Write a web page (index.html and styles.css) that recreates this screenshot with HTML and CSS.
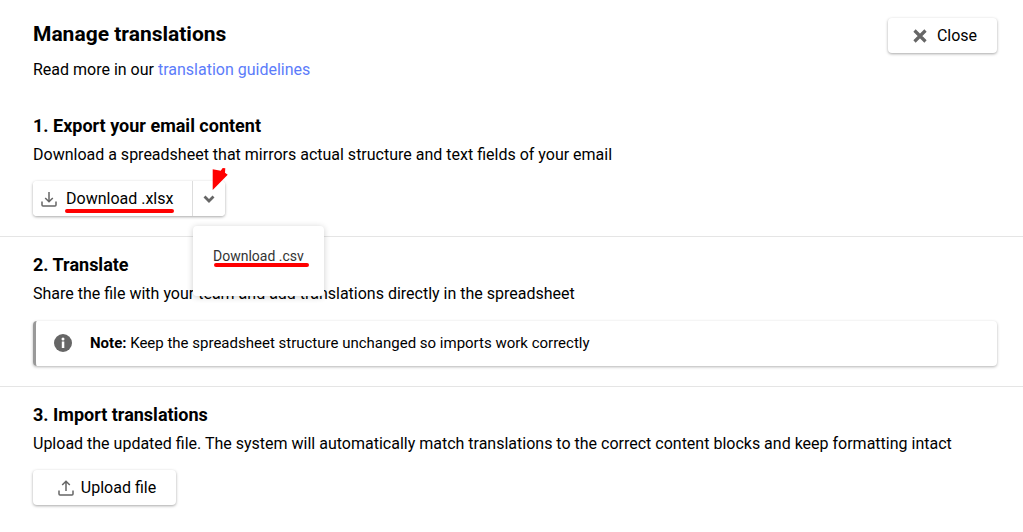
FILE: index.html
```html
<!DOCTYPE html>
<html lang="en">
<head>
    <meta charset="UTF-8">
    <title>Manage translations</title>
    <link rel="stylesheet" href="styles.css">
</head>
<body>
    <section class="section section-top">
        <div class="header">
            <div>
                <h1>Manage translations</h1>
                <p>Read more in our <a href="#">translation guidelines</a></p>
            </div>
            <button class="btn btn-close">
                <svg class="icon" viewBox="0 0 14 14"><path d="M1.500 1.500l11 11M12.500 1.500l-11 11" stroke="#666" stroke-width="3.200" fill="none"/></svg>
                Close
            </button>
        </div>
        <h2>1. Export your email content</h2>
        <p>Download a spreadsheet that mirrors actual structure and text fields of your email</p>
        <div class="split-wrap">
            <div class="split">
                <button class="split-main">
                    <svg class="icon" viewBox="0 0 18 18"><path d="M9 2v9.500M5.200 8l3.800 3.800L12.800 8M2 11.500V15a1 1 0 0 0 1 1h12a1 1 0 0 0 1-1v-3.500" stroke="#666" stroke-width="1.500" fill="none"/></svg>
                    <span class="marked">Download .xlsx</span>
                </button>
                <button class="split-toggle">
                    <svg class="chevron" viewBox="0 0 12 8"><path d="M1.500 1.500L6 6l4.500-4.500" stroke="#666" stroke-width="2.800" fill="none"/></svg>
                </button>
            </div>
            <svg class="arrow" viewBox="0 0 16 24"><path d="M.7 2.300l8 1.400L10.700 1l2.600.3-.3 4.400 2.700 2L.7 23z" fill="#f00"/></svg>
            <div class="menu">
                <span class="marked marked-small">Download .csv</span>
            </div>
        </div>
    </section>
    <section class="section section-translate">
        <h2>2. Translate</h2>
        <p>Share the file with your team and add translations directly in the spreadsheet</p>
        <div class="note">
            <svg class="note-icon" viewBox="0 0 18 18"><circle cx="9" cy="9" r="9" fill="#666"/><rect x="7.800" y="7.500" width="2.500" height="6.500" fill="#fff"/><circle cx="9" cy="5" r="1.500" fill="#fff"/></svg>
            <span><b>Note:</b> Keep the spreadsheet structure unchanged so imports work correctly</span>
        </div>
    </section>
    <section class="section section-import">
        <h2>3. Import translations</h2>
        <p>Upload the updated file. The system will automatically match translations to the correct content blocks and keep formatting intact</p>
        <button class="btn btn-upload">
            <svg class="icon" viewBox="0 0 18 18"><path d="M9 12V2.500M5.200 6L9 2.200 12.800 6M2 11.500V15a1 1 0 0 0 1 1h12a1 1 0 0 0 1-1v-3.500" stroke="#666" stroke-width="1.500" fill="none"/></svg>
            Upload file
        </button>
    </section>
</body>
</html>
```

FILE: styles.css
```css
* {
    box-sizing: border-box;
    margin: 0;
    padding: 0;
}

html, body {
    height: 100%;
    overflow: hidden;
}

body {
    font-family: Roboto, sans-serif;
    font-size: 16px;
    line-height: 24px;
    background-color: #fff;
    color: #000;
}

.section {
    padding: 0 26px 0 33px;
    border-bottom: 1px solid #e5e5e5;
}

.section-top {
    height: 237px;
    padding-top: 18px;
}

.section-translate {
    height: 150px;
    padding-top: 16px;
}

.section-import {
    border-bottom: none;
    padding-top: 16px;
}

.header {
    display: flex;
    justify-content: space-between;
    align-items: flex-start;
    margin-bottom: 32px;
}

h1 {
    font-size: 21px;
    font-weight: 700;
    line-height: 32px;
    margin-bottom: 8px;
}

h2 {
    font-size: 18px;
    font-weight: 700;
    line-height: 24px;
    margin-bottom: 5px;
}

a {
    color: #5c7cfa;
    text-decoration: none;
}

button {
    font: inherit;
    color: inherit;
    background: #fff;
    border: none;
    cursor: pointer;
    display: flex;
    align-items: center;
}

.btn {
    height: 35px;
    border-radius: 4px;
    box-shadow: 0 1px 3px rgba(0, 0, 0, 0.35);
    justify-content: center;
}

.btn-close {
    width: 109px;
    padding-left: 5px;
    gap: 10px;
}

.btn-close .icon {
    width: 14px;
    height: 14px;
}

.btn-upload {
    width: 143px;
    margin-top: 14px;
    padding-left: 4px;
    gap: 6px;
}

.icon {
    width: 18px;
    height: 18px;
}

.split-wrap {
    position: relative;
    margin-top: 14px;
}

.split {
    display: inline-flex;
    height: 35px;
    border-radius: 4px;
    box-shadow: 0 1px 3px rgba(0, 0, 0, 0.35);
}

.split-main {
    width: 159px;
    padding-left: 7px;
    gap: 8px;
    border-radius: 4px 0 0 4px;
}

.split-toggle {
    width: 33px;
    justify-content: center;
    border-left: 1px solid #ddd;
    border-radius: 0 4px 4px 0;
}

.chevron {
    width: 12px;
    height: 8px;
}

.marked {
    position: relative;
}

.marked::after {
    content: "";
    position: absolute;
    left: -1px;
    right: -1px;
    bottom: -2px;
    height: 4px;
    border-radius: 2px;
    background-color: #f00;
}

.arrow {
    position: absolute;
    left: 179px;
    top: -14px;
    width: 16px;
    height: 24px;
}

.menu {
    position: absolute;
    left: 160px;
    top: 45px;
    width: 131px;
    height: 70px;
    padding: 18px 20px;
    background-color: #fff;
    border-radius: 4px;
    box-shadow: 0 1px 6px rgba(0, 0, 0, 0.2);
    font-size: 14px;
    color: #333;
    z-index: 2;
}

.marked-small::after {
    left: 1px;
    right: -5px;
    bottom: -3px;
}

.note {
    display: flex;
    align-items: center;
    gap: 18px;
    height: 45px;
    margin-top: 15px;
    padding: 0 0 1px 18px;
    font-size: 15px;
    border-left: 3px solid #999;
    border-radius: 4px;
    box-shadow: 0 1px 3px rgba(0, 0, 0, 0.3);
}

.note b {
    font-weight: 700;
}

.note-icon {
    width: 18px;
    height: 18px;
}
```
